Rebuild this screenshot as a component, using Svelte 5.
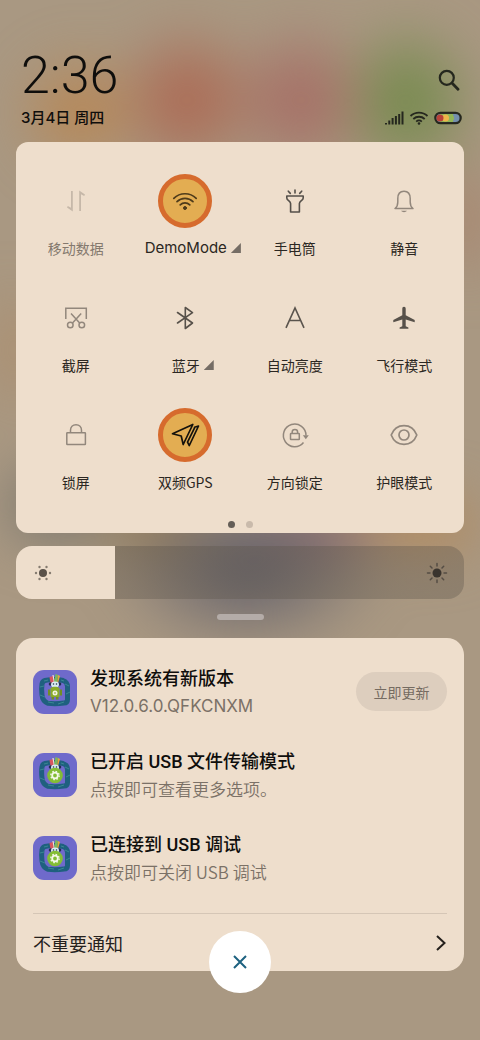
<script lang="ts">
  type Tile = {
    icon: string
    label: string
    active?: boolean
    dim?: boolean
    more?: boolean
    latin?: boolean
  }

  const tiles: Tile[] = [
    { icon: 'data', label: '移动数据', dim: true },
    { icon: 'wifi', label: 'DemoMode', active: true, more: true, latin: true },
    { icon: 'torch', label: '手电筒' },
    { icon: 'bell', label: '静音' },
    { icon: 'screenshot', label: '截屏' },
    { icon: 'bluetooth', label: '蓝牙', more: true },
    { icon: 'auto', label: '自动亮度' },
    { icon: 'plane', label: '飞行模式' },
    { icon: 'lock', label: '锁屏' },
    { icon: 'gps', label: '双频GPS', active: true },
    { icon: 'rotate', label: '方向锁定' },
    { icon: 'eye', label: '护眼模式' },
  ]

  const notifications = [
    { badge: 'robot', title: '发现系统有新版本', text: 'V12.0.6.0.QFKCNXM', action: '立即更新', latin: true },
    { badge: 'gear', title: '已开启 USB 文件传输模式', text: '点按即可查看更多选项。' },
    { badge: 'gear', title: '已连接到 USB 调试', text: '点按即可关闭 USB 调试' },
  ]

  let brightness = $state(22)
</script>

{#snippet tileIcon(name: string)}
  <svg class="glyph" viewBox="0 0 32 32" aria-hidden="true">
    {#if name === 'data'}
      <g fill="#c6b8a9">
        <path d="M11 6h1.800v20.500L7 22.500l.8-1.400 3.200 1.600zM19.200 26V5.500L25 9.500l-.8 1.400L21 9.300V26z" />
      </g>
    {:else if name === 'wifi'}
      <g stroke="#4e3b1a" stroke-width="1.7" stroke-linecap="round">
        <path d="M4.800 13.400c6.200-6.200 16.200-6.200 22.400 0M8 16.700c4.400-4.400 11.600-4.400 16 0M11.200 19.900c2.700-2.600 6.900-2.600 9.600 0" />
        <circle cx="16" cy="23" r="1.500" fill="#4e3b1a" stroke-width="1" />
      </g>
    {:else if name === 'torch'}
      <g stroke="#55504a" stroke-width="1.600" stroke-linejoin="round" stroke-linecap="round">
        <path d="M7.800 11h16.400v2c0 2.500-3.800 2.800-3.800 5.500V27h-8.800v-8.500c0-2.700-3.800-3-3.800-5.500zM16 5v3M9.300 6.200l2 2.200M22.700 6.200l-2 2.200" />
      </g>
    {:else if name === 'bell'}
      <g stroke="#92877c" stroke-width="1.500" stroke-linejoin="round">
        <path d="M7 23.500c2.300-1.600 2.800-3.600 2.800-6.500v-3.500c0-4.400 2.300-7.300 6.200-7.300s6.200 2.900 6.200 7.300V17c0 2.900.5 4.900 2.800 6.500z" />
        <path d="M13 25.800c1.300 1.900 4.700 1.900 6 0z" fill="#92877c" stroke="none" />
      </g>
    {:else if name === 'screenshot'}
      <g stroke="#92877c" stroke-width="1.500">
        <path d="M5.800 17V6.300h20.500V17M11 11.500l8.700 9.500M21.200 11.500L12.500 21" />
        <circle cx="10.300" cy="23" r="2.800" />
        <circle cx="21.800" cy="23" r="2.800" />
      </g>
    {:else if name === 'bluetooth'}
      <path d="M8.500 10.500l15 10.500-7.200 5.500V5.500l7.200 5.200L8.500 21" stroke="#57514a" stroke-width="1.600" stroke-linejoin="round" stroke-linecap="round" />
    {:else if name === 'auto'}
      <path d="M7 25.800L16 6l9 19.800M10.500 18.500h11" stroke="#5a544d" stroke-width="1.600" />
    {:else if name === 'plane'}
      <path d="M16 4.800c1.200 0 1.700.9 1.700 2v6.400l9 4.800v2.300l-9-2.800v6.800l2.700 1.300v1.200h-8.800v-1.200l2.700-1.300v-6.800l-9 2.800V18l9-4.800V6.800c0-1.100.5-2 1.700-2z" fill="#57514a" />
    {:else if name === 'lock'}
      <g stroke="#92877c" stroke-width="1.500" stroke-linejoin="round">
        <rect x="6.800" y="13.800" width="18.600" height="11.800" rx="0.500" />
        <path d="M10.500 13.500v-2.300c0-3.200 2.200-5.500 5.500-5.500s5.500 2.300 5.500 5.500v2.300" />
      </g>
    {:else if name === 'gps'}
      <g stroke="#15120c" stroke-width="1.700" stroke-linejoin="round" stroke-linecap="round">
        <path d="M3.500 14.800l20.300-9.300-9.600 20-2-8.500z" />
        <path d="M25.500 8.300l4-1.300-9.200 19.500-1.800-3.300 7.200-14.500" />
      </g>
    {:else if name === 'rotate'}
      <g stroke="#92877c" stroke-width="1.500">
        <path d="M24.500 23.500a11.300 11.300 0 1 1 2.500-7" />
        <rect x="11.500" y="14.500" width="8.800" height="6" rx="0.500" />
        <path d="M13.200 14.200v-1.200c0-3.300 5.400-3.300 5.400 0v1.200" />
        <path d="M23.800 16.200h6l-3 4z" fill="#92877c" stroke="none" />
      </g>
    {:else if name === 'eye'}
      <g stroke="#92877c" stroke-width="1.700">
        <path d="M3.200 16C8 3.500 24 3.500 28.800 16 24 28.500 8 28.500 3.200 16z" stroke-linejoin="round" />
        <circle cx="16" cy="16" r="5" />
      </g>
    {/if}
  </svg>
{/snippet}

{#snippet appIcon(badge: string)}
  <svg class="app-icon" viewBox="0 0 44 44" aria-hidden="true">
    <rect width="44" height="44" rx="11" fill="#6f6acb" />
    <path d="M12 10.500c7-1.500 13-1.500 18 0 3 1 4.500 3 4.500 6v13c0 2.500-1 3.500-3.500 3.500-5 .8-11 1-16 .3-4-1.300-5.500-4-6-8.300-.5-4-.5-8 0-11 .3-2 1-3 3-3.500z" fill="none" stroke="#1f607f" stroke-width="5" />
    <path d="M7 17l4-1M7 25l5 2M15 32l6 1M25 34l6-2M33 24l4-2M32 14l4 2M11 11l4-1M28 10l3 1" fill="none" stroke="#3a8792" stroke-width="1" />
    <path d="M16.500 7l3.500-1 1.500 7h-4z" fill="#d95560" />
    <path d="M20 5l1.500 8" stroke="#f0e5d8" stroke-width="1.200" />
    <path d="M22.500 4l2.500 1-1 8h-3z" fill="#7bb85a" />
    <path d="M25 5l2 1-2 7h-1z" fill="#e3a63d" />
    <circle cx="17.500" cy="14" r="1.800" fill="#23304f" />
    <circle cx="26.500" cy="14" r="1.800" fill="#23304f" />
    <ellipse cx="22" cy="14.500" rx="4" ry="3" fill="#d9edf4" />
    <circle cx="20.500" cy="14" r="0.800" fill="#27344d" />
    <circle cx="23.500" cy="14" r="0.800" fill="#27344d" />
    {#if badge === 'robot'}
      <path d="M17.500 18.500c.5-2.500 8.500-2.500 9 0v8.500h-9z" fill="#8aab2a" />
      <path d="M15 19.500h2v6h-2zM27 19.500h2v6h-2zM18.500 27h2.500v2.500h-2.500zM23 27h2.500v2.500H23z" fill="#718f24" />
      <circle cx="22" cy="23" r="2.500" fill="#f1f3df" />
      <path d="M22 22v2" stroke="#86a727" stroke-width="1" />
    {:else}
      <circle cx="22" cy="22.500" r="7.800" fill="#83bd35" />
      <circle cx="22" cy="22.500" r="2.800" fill="none" stroke="#f5f8e9" stroke-width="1.800" />
      <circle cx="22" cy="22.500" r="4.200" fill="none" stroke="#f5f8e9" stroke-width="1.300" stroke-dasharray="1.600 1.700" />
    {/if}
  </svg>
{/snippet}

<main class="shade">
  <header>
    <div>
      <time class="clock">2:36</time>
      <div class="date">3月4日 周四</div>
    </div>
    <div class="status">
      <button class="search" aria-label="搜索">
        <svg viewBox="0 0 22 22" width="22" height="22">
          <circle cx="8.800" cy="8.800" r="7" stroke-width="2.200" />
          <path d="M14.200 14.200l5.800 6" stroke-width="2.800" stroke-linecap="round" />
        </svg>
      </button>
      <div class="indicators">
        <svg viewBox="0 0 20 14" width="20" height="14">
          <path d="M2 13.500V12M5.300 13.500V9.500M8.600 13.500V7M11.900 13.500V5M15.200 13.500V3M18.500 13.500V0.500" stroke-width="2" />
        </svg>
        <svg viewBox="0 0 20 14" width="20" height="14">
          <path d="M1.500 5c4.800-4.600 12.200-4.600 17 0M4.300 8c3.300-3 8.100-3 11.400 0M7.200 10.600c1.600-1.400 4-1.400 5.600 0" stroke-width="1.800" />
          <circle cx="10" cy="12.500" r="1.300" fill="#25271e" stroke="none" />
        </svg>
        <svg viewBox="0 0 28 14" width="28" height="14">
          <rect x="1" y="1.500" width="26" height="11" rx="5.500" fill="#2c2c28" stroke-width="1.600" />
          <rect x="2.500" y="3" width="23" height="8" rx="4" fill="#7590ad" stroke="none" />
          <path d="M6 3h13v8H6z" fill="#93b557" stroke="none" />
          <circle cx="16.500" cy="7" r="3.500" fill="#93b557" stroke="none" />
          <circle cx="11.500" cy="7" r="3.500" fill="#eeb54a" stroke="none" />
          <circle cx="6" cy="7" r="3.500" fill="#b94239" stroke="none" />
        </svg>
      </div>
    </div>
  </header>

  <section class="card controls">
    <div class="tiles">
      {#each tiles as tile}
        <button class="tile" class:dim={tile.dim}>
          <span class="icon" class:active={tile.active}>{@render tileIcon(tile.icon)}</span>
          <span class="label" class:latin={tile.latin} class:more={tile.more}>
            {tile.label}
            {#if tile.more}<span class="corner"></span>{/if}
          </span>
        </button>
      {/each}
    </div>
    <div class="pages">
      <span class="page current"></span>
      <span class="page"></span>
    </div>
  </section>

  <div class="brightness">
    <input type="range" min="0" max="100" aria-label="亮度" bind:value={brightness} style="--level: {brightness}%" />
    <svg class="sun low" viewBox="0 0 24 24" aria-hidden="true">
      <circle cx="12" cy="12" r="4" />
      <g class="soft">
        <circle cx="5" cy="12" r="1.200" /><circle cx="19" cy="12" r="1.200" />
        <circle cx="8.500" cy="6" r="1.200" /><circle cx="15.500" cy="6" r="1.200" />
        <circle cx="8.500" cy="18" r="1.200" /><circle cx="15.500" cy="18" r="1.200" />
      </g>
    </svg>
    <svg class="sun high" viewBox="0 0 24 24" aria-hidden="true">
      <circle cx="12" cy="12" r="4.500" />
      <path d="M12 2.500v2.500M12 19v2.500M2.500 12H5M19 12h2.500M5.300 5.300l1.700 1.700M17 17l1.700 1.700M18.700 5.300L17 7M7 17l-1.700 1.700" />
    </svg>
  </div>

  <div class="handle"></div>

  <section class="card notices">
    {#each notifications as item}
      <article>
        {@render appIcon(item.badge)}
        <div class="body">
          <h2>{item.title}</h2>
          <p class:latin={item.latin}>{item.text}</p>
        </div>
        {#if item.action}
          <button class="action">{item.action}</button>
        {/if}
      </article>
    {/each}
    <button class="minor">
      <span>不重要通知</span>
      <svg viewBox="0 0 12 18" width="12" height="18" aria-hidden="true">
        <path d="M2 2l7.500 7L2 16" />
      </svg>
    </button>
    <button class="close" aria-label="清除通知">
      <svg viewBox="0 0 16 16" width="16" height="16">
        <path d="M2 2l12 12M14 2L2 14" />
      </svg>
    </button>
  </section>
</main>

<style>
  :global(body) {
    margin: 0;
  }

  .shade {
    position: relative;
    isolation: isolate;
    overflow: hidden;
    box-sizing: border-box;
    min-height: 100vh;
    padding: 48px 16px;
    font-family: 'Noto Sans CJK SC', sans-serif;
    color: #0f0e0c;
    background: #a99882;
  }

  /* blurred home screen behind the shade */
  .shade::before {
    content: '';
    position: absolute;
    inset: 0;
    z-index: -1;
    filter: blur(22px);
    background:
      radial-gradient(ellipse 75px 72px at 80px 112px, #b98550, transparent),
      radial-gradient(ellipse 82px 85px at 187px 100px, #ac6852 10%, transparent),
      radial-gradient(ellipse 80px 85px at 300px 100px, #a66d64 10%, transparent),
      radial-gradient(ellipse 80px 90px at 407px 102px, #788b50 20%, transparent),
      radial-gradient(ellipse 140px 90px at 248px 568px, #62606a 5%, transparent),
      radial-gradient(ellipse 90px 40px at 310px 535px, #93686c, transparent),
      radial-gradient(ellipse 110px 50px at 420px 525px, #b28a5e, transparent),
      radial-gradient(ellipse 90px 45px at 165px 530px, #947a52, transparent),
      radial-gradient(ellipse 90px 60px at 60px 505px, #74736c, transparent),
      radial-gradient(ellipse 40px 80px at 480px 220px, #a8765f, transparent),
      radial-gradient(ellipse 40px 80px at 0 350px, #b08860, transparent);
  }

  button {
    padding: 0;
    border: 0;
    background: none;
    font: inherit;
    color: inherit;
    cursor: pointer;
  }

  svg {
    display: block;
    fill: none;
  }

  header {
    display: flex;
    justify-content: space-between;
    padding: 0 2px 0 5px;
  }

  .clock {
    display: block;
    font-family: Roboto, sans-serif;
    font-size: 52px;
    font-weight: 300;
    line-height: 56px;
  }

  .date {
    font-family: Inter, 'Noto Sans CJK SC', sans-serif;
    font-size: 15px;
    font-weight: 500;
    line-height: 28px;
    margin-bottom: 10px;
  }

  .status {
    display: flex;
    flex-direction: column;
    align-items: flex-end;
    gap: 20px;
    padding-top: 21px;
  }

  .status svg {
    stroke: #25271e;
  }

  .search {
    margin-right: 2px;
  }

  .indicators {
    display: flex;
    gap: 5px;
  }

  .card {
    background: #eedecc;
  }

  .controls {
    border-radius: 12px;
    padding: 32px 5px 5px;
  }

  .tiles {
    display: grid;
    grid-template-columns: repeat(4, minmax(0, 1fr));
    row-gap: 32px;
  }

  .tile {
    display: flex;
    flex-direction: column;
    align-items: center;
    gap: 9px;
    font-size: 14px;
    line-height: 22px;
    color: #2b2722;
  }

  .tile.dim {
    color: #84796e;
  }

  .icon {
    display: flex;
    align-items: center;
    justify-content: center;
    box-sizing: border-box;
    width: 54px;
    height: 54px;
    border-radius: 50%;
  }

  .icon.active {
    background: #e3ad52;
    border: 5px solid #d66b2d;
  }

  .glyph {
    width: 32px;
    height: 32px;
    flex-shrink: 0;
  }

  .label {
    display: flex;
    align-items: center;
    gap: 4px;
    height: 22px;
    white-space: nowrap;
  }

  .label.more {
    padding-left: 15px;
  }

  .label.latin {
    font-family: Inter, sans-serif;
    font-size: 15px;
  }

  .corner {
    width: 10px;
    height: 10px;
    background: #756d65;
    clip-path: polygon(100% 0, 100% 100%, 0 100%);
  }

  .pages {
    display: flex;
    justify-content: center;
    gap: 11px;
    padding-top: 28px;
  }

  .page {
    width: 7px;
    height: 7px;
    border-radius: 50%;
    background: #c9baab;
  }

  .page.current {
    background: #645e57;
  }

  .brightness {
    position: relative;
    margin-top: 13px;
  }

  .brightness input {
    display: block;
    appearance: none;
    width: 100%;
    height: 53px;
    margin: 0;
    border-radius: 16px;
    background: linear-gradient(to right, #eedecc var(--level), rgba(92, 84, 74, 0.35) var(--level));
  }

  .brightness input::-webkit-slider-thumb {
    appearance: none;
    width: 1px;
    height: 53px;
  }

  .sun {
    position: absolute;
    top: 15px;
    width: 24px;
    height: 24px;
    fill: #3a342e;
    stroke: none;
    pointer-events: none;
  }

  .sun.low {
    left: 15px;
    fill: #5a524a;
  }

  .sun.high {
    right: 15px;
  }

  .sun .soft {
    fill: #857b70;
  }

  .sun path {
    stroke: #554d44;
    stroke-width: 1.5;
    stroke-linecap: round;
  }

  .handle {
    width: 47px;
    height: 6px;
    margin: 15px auto 18px;
    border-radius: 3px;
    background: #b4aca8;
  }

  .notices {
    position: relative;
    border-radius: 17px;
    padding: 12px 17px 0;
  }

  article {
    display: flex;
    align-items: center;
    gap: 13px;
    height: 83px;
  }

  .app-icon {
    width: 44px;
    height: 44px;
    flex-shrink: 0;
  }

  .body {
    flex: 1;
  }

  h2 {
    margin: 0;
    font-family: Roboto, 'Noto Sans CJK SC', sans-serif;
    font-size: 18px;
    font-weight: 500;
    line-height: 28px;
  }

  p {
    margin: 0;
    font-size: 17px;
    font-weight: 350;
    line-height: 26px;
    color: #7b7167;
  }

  p.latin {
    font-family: Inter, sans-serif;
    font-weight: 400;
  }

  .action {
    width: 91px;
    height: 39px;
    border-radius: 20px;
    background: #ddcebe;
    color: #756b61;
    font-size: 14px;
  }

  .minor {
    display: flex;
    align-items: center;
    justify-content: space-between;
    width: 100%;
    height: 58px;
    margin-top: 14px;
    border-top: 1px solid #d5c6b6;
    font-size: 18px;
    color: #25211d;
  }

  .minor path {
    stroke: #25211d;
    stroke-width: 2;
  }

  .close {
    position: absolute;
    left: 50%;
    bottom: -22px;
    display: flex;
    align-items: center;
    justify-content: center;
    width: 62px;
    height: 62px;
    border-radius: 50%;
    background: #fff;
    transform: translateX(-50%);
  }

  .close path {
    stroke: #1d6280;
    stroke-width: 2;
  }
</style>
